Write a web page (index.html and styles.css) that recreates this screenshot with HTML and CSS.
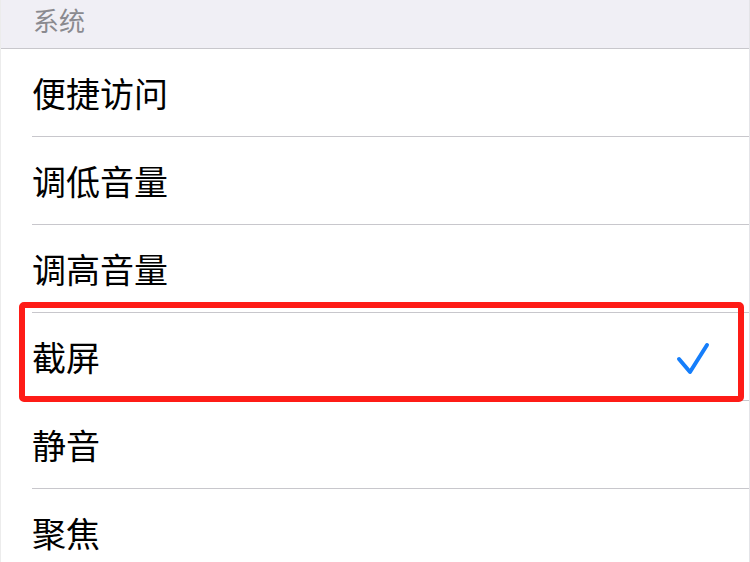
FILE: index.html
```html
<!DOCTYPE html>
<html lang="zh-CN">
<head>
<meta charset="utf-8">
<title>系统</title>
<link rel="stylesheet" href="styles.css">
</head>
<body>
<div class="page">
  <div class="section-header">系统</div>
  <div class="list">
    <div class="row"><div class="row-inner"><span class="label">便捷访问</span></div></div>
    <div class="row"><div class="row-inner"><span class="label">调低音量</span></div></div>
    <div class="row"><div class="row-inner"><span class="label">调高音量</span></div></div>
    <div class="row selected">
      <div class="row-inner">
        <span class="label">截屏</span>
        <svg class="check" width="36" height="34" viewBox="0 0 36 34">
          <polyline points="3,18 14,31 31,4" fill="none" stroke="#157efb" stroke-width="4" stroke-linecap="round" stroke-linejoin="round"/>
        </svg>
      </div>
      <div class="highlight"></div>
    </div>
    <div class="row"><div class="row-inner"><span class="label">静音</span></div></div>
    <div class="row"><div class="row-inner"><span class="label">聚焦</span></div></div>
  </div>
</div>
</body>
</html>
```
FILE: styles.css
```css
* { box-sizing: border-box; }
html, body {
  margin: 0;
  padding: 0;
  background: #ffffff;
}
body {
  font-family: "Noto Sans CJK SC", "Noto Sans", sans-serif;
  width: 750px;
  height: 562px;
  overflow: hidden;
}
.page {
  width: 750px;
  border-left: 1px solid #ececec;
  border-right: 1px solid #e4e4e8;
  min-height: 562px;
}
.section-header {
  height: 49px;
  padding: 7px 0 0 32px;
  background: #f0eff5;
  border-bottom: 1px solid #c8c7cc;
  color: #8a8a8f;
  font-size: 26px;
  line-height: 26px;
}
.row {
  position: relative;
  display: flex;
}
.row-inner {
  flex: 1;
  margin-left: 31px;
  height: 88px;
  border-bottom: 1px solid #c8c7cc;
  display: flex;
  align-items: center;
  justify-content: space-between;
  padding-right: 37px;
}
.label {
  font-size: 34px;
  line-height: 34px;
  color: #000000;
}
.check {
  display: block;
  margin-top: 2px;
}
.highlight {
  position: absolute;
  top: -11px;
  left: 18px;
  width: 725px;
  height: 100px;
  border: 6px solid #fe1c17;
  border-radius: 5px;
  pointer-events: none;
}
```
